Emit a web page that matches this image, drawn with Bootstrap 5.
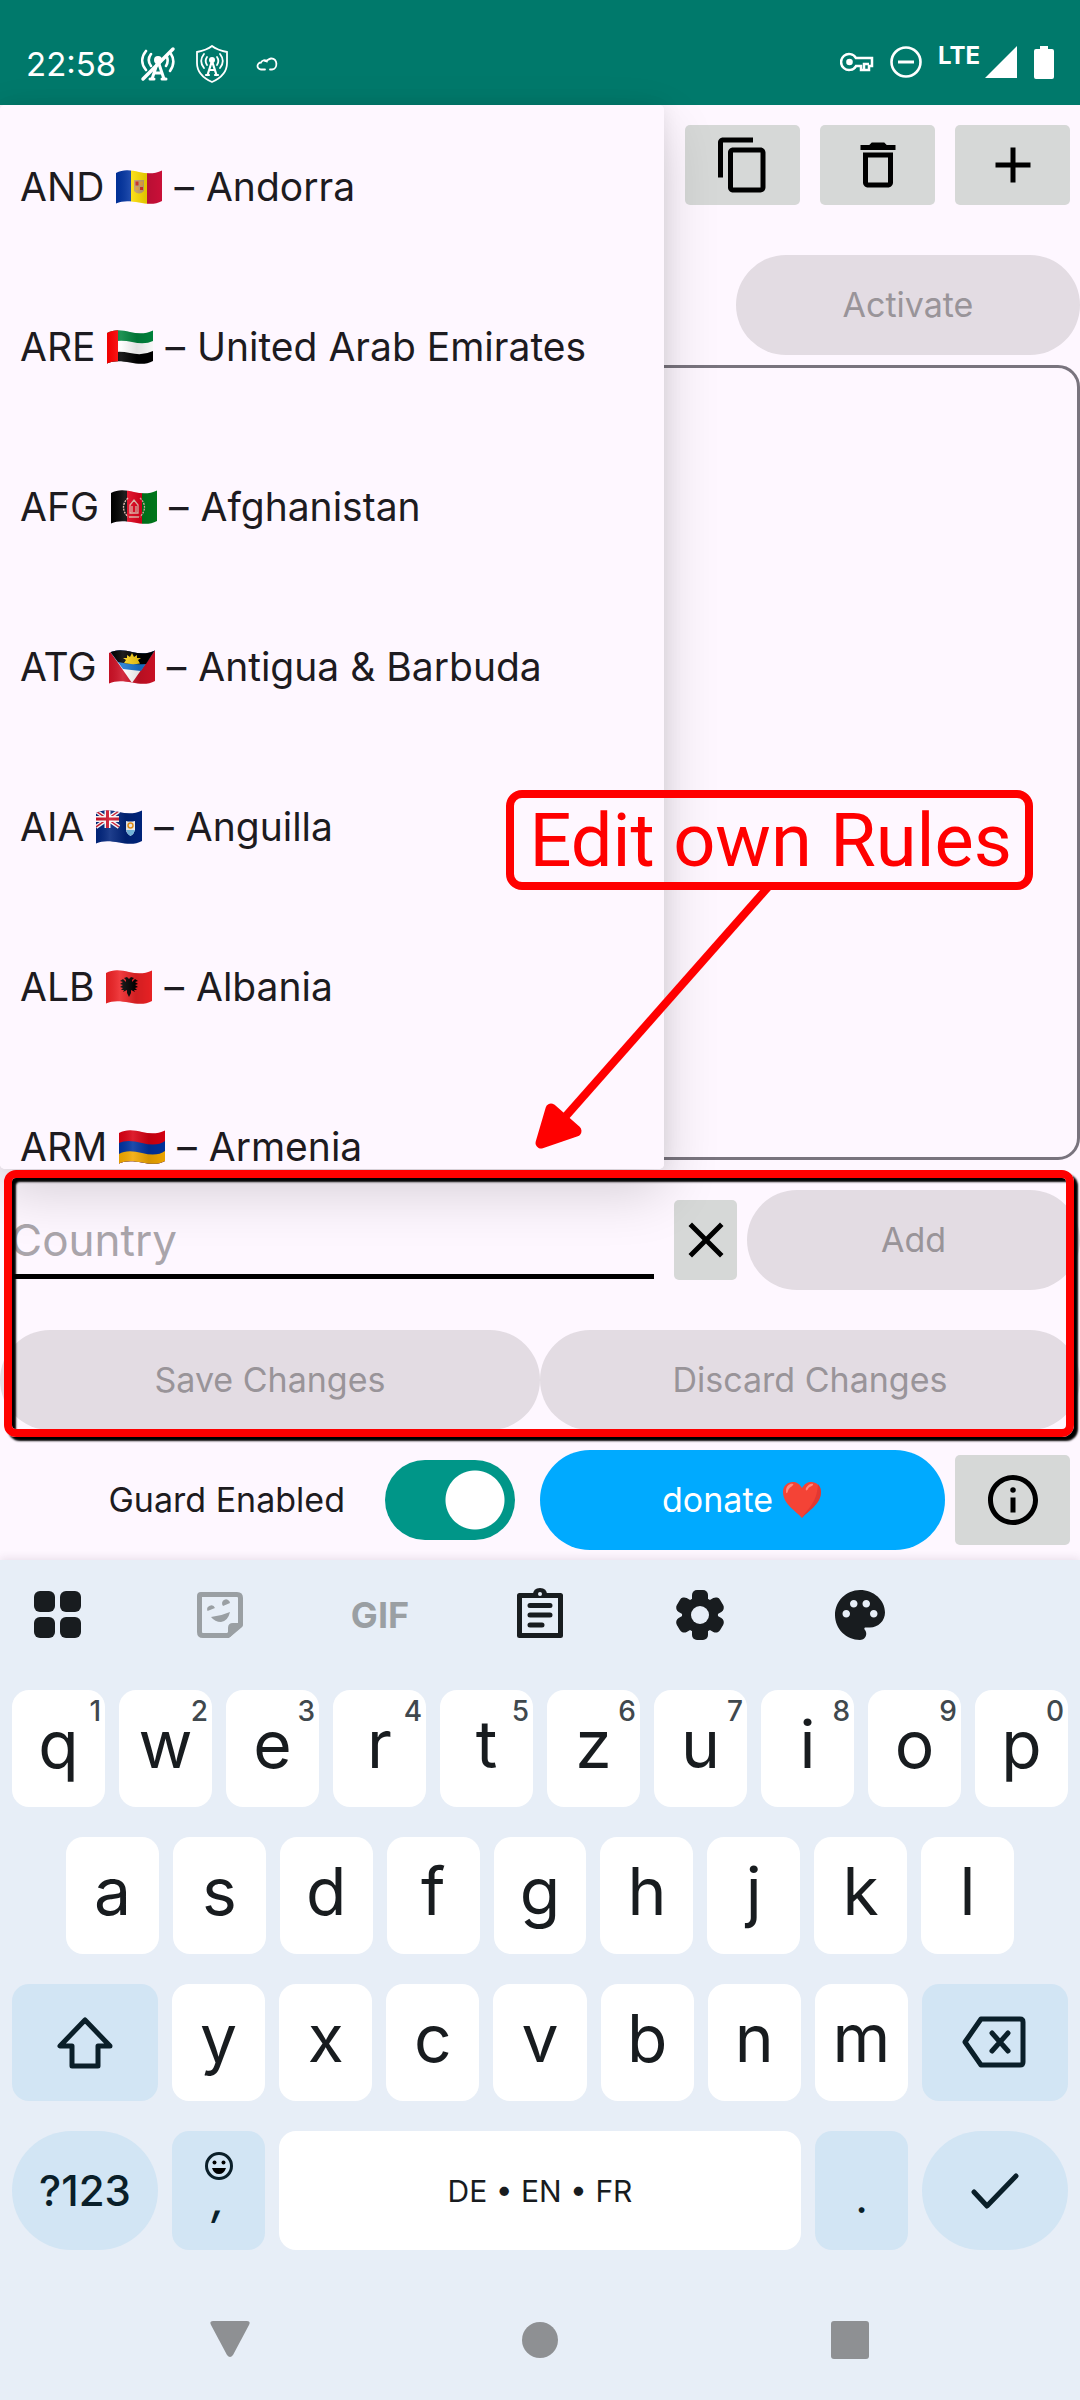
<!DOCTYPE html>
<html lang="en">
<head>
<meta charset="utf-8">
<meta name="viewport" content="width=device-width, initial-scale=1">
<title>Edit own Rules</title>
<link href="https://cdn.jsdelivr.net/npm/bootstrap@5.3.0/dist/css/bootstrap.min.css" rel="stylesheet">
<style>
  body { background: #fef7ff; color: #1d1b20; font-family: Inter, sans-serif; font-size: 34px; line-height: 44px; }
  svg { display: block; flex: none; }
  .status-bar { background: #00796b; color: #fff; height: 105px; padding: 42px 26px 0; font-size: 33px; }
  .net-type { font-size: 24px; line-height: 20px; font-weight: 700; margin-right: 4px; }
  .tool-row { padding: 20px 10px 50px; gap: 20px; }
  .gray-btn { background: #d6d8d7; border: 0; border-radius: 5px; padding: 0; color: #000; width: 115px; height: 80px; display: flex; align-items: center; justify-content: center; }
  .gray-btn.narrow { width: 63px; margin: 0 10px; }
  .gray-btn.tall { height: 90px; margin: 0 10px; }
  .pill-btn, .pill-btn:disabled { background: #e3dce3; color: #999499; border: 0; border-radius: 50px; height: 100px; font-size: 34px; line-height: 44px; padding: 0; opacity: 1; }
  .pill-act { width: 344px; }
  .pill-add { width: 333px; }
  .pill-btn.donate { background: #00aaff; color: #fff; }
  .rules-box { border: 3px solid #79747e; border-radius: 22px; background: transparent; min-height: 795px; resize: none; margin-top: 10px; }
  .edit-area { margin-top: 30px; }
  .edit-area .second-row { margin-top: 40px; }
  .country-input { border: 0; border-bottom: 5px solid #000; border-radius: 0; background: transparent; height: 89px; padding: 16px 0 0; margin: 0 10px; font-size: 44px; width: calc(100% - 20px); }
  .country-input::placeholder { color: #aaa5ab; opacity: 1; }
  .country-menu { position: absolute; left: 0; bottom: calc(100% + 21px); width: 100%; height: 1064px; overflow: hidden; background: #fef7ff; border-radius: 5px; z-index: 2; }
  .menu-shade { position: absolute; left: 0; bottom: calc(100% + 21px); width: 100%; height: 1064px; border-radius: 5px; z-index: 1; pointer-events: none; box-shadow: 0 24px 56px rgba(0,0,0,.16), 0 0 20px rgba(0,0,0,.08); }
  .country-item { height: 160px; padding: 4px 20px 0; gap: 12px; font-size: 39px; line-height: 48px; color: #1d1b20; text-decoration: none; white-space: nowrap; }
  .mark-frame { position: absolute; top: -20px; left: 4px; right: 6px; bottom: -7px; border: 8px solid #f00; border-radius: 12px; box-shadow: 4px 4px 2px #000, inset 4px 4px 2px #000; z-index: 4; pointer-events: none; }
  .callout-box { position: absolute; top: 685px; right: 47px; border: 8px solid #f00; border-radius: 16px; padding: 1px 13px 0 15px; color: #f00; font-family: Roboto, sans-serif; font-size: 74px; line-height: 83px; white-space: nowrap; z-index: 5; }
  .callout-arrow { position: absolute; top: 88px; left: 16px; }
  .guard-row { margin: 20px 0 10px; }
  .guard-side { gap: 40px; padding-right: 25px; }
  #guard { width: 130px; height: 80px; margin: 0; border: 0; border-radius: 40px; background: #009688 radial-gradient(circle at 90px 40px, #fff 29px, transparent 30px); box-shadow: none; }
  .keyboard { background: #e7eef7; box-shadow: 0 -2px 8px rgba(60,30,60,.1); color: #181c1f; }
  .kb-tools { padding: 25px 30px 45px; gap: 100px; }
  .kb-tools button { width: 60px; height: 60px; padding: 0; border: 0; background: none; color: #181c1f; }
  .kb-tools .faded { color: #9a9fa3; }
  .gif-text { font-size: 36px; line-height: 60px; font-weight: 700; }
  .kb-row { gap: 14px; padding: 0 12px; margin-bottom: 30px; }
  .kb-row.inset { padding: 0 66px; }
  .cap { flex: 1 1 0; min-width: 0; height: 117px; background: #fff; border: 0; border-radius: 17px; padding: 0 0 10px; font-size: 66px; line-height: 80px; color: #181c1f; position: relative; }
  .cap sup { position: absolute; top: 5px; right: 4px; font-size: 28px; line-height: 32px; color: #40484d; font-weight: 500; }
  .kb-row.last .cap { height: 119px; }
  .cap.side { flex: 0 0 146px; background: #d2e5f4; color: #0a1f29; padding: 0; display: flex; align-items: center; justify-content: center; }
  .cap.tint { flex: 0 0 93px; background: #d2e5f4; color: #0a1f29; padding: 0; display: flex; flex-direction: column; align-items: center; font-size: 44px; line-height: 44px; }
  .cap.dot { justify-content: flex-end; padding-bottom: 31px; }
  .cap.comma { padding-top: 20px; }
  .comma-mark { font-style: italic; font-weight: 500; line-height: 36px; }
  .cap.round { border-radius: 60px; font-size: 42px; font-weight: 500; }
  .cap.space { font-size: 30px; padding: 0; }
  .nav-keys { padding: 30px 200px; }
  .nav-keys button { width: 60px; height: 60px; border: 0; padding: 0; background: none; color: #8e9093; display: flex; align-items: center; justify-content: center; }
</style>
</head>
<body class="d-flex flex-column min-vh-100">
<svg width="0" height="0" class="position-absolute" aria-hidden="true"><defs>
  <clipPath id="wave"><path d="M0 3C7-1 15 0 23 2S39 4 46 .5V31C39 35 31 34 23 32.500S7 30 0 33.500Z"/></clipPath>
  <linearGradient id="fold"><stop offset="0" stop-color="#000" stop-opacity=".06"/><stop offset=".3" stop-color="#fff" stop-opacity=".12"/><stop offset=".65" stop-color="#000" stop-opacity=".12"/><stop offset="1" stop-color="#000" stop-opacity=".03"/></linearGradient>
</defs></svg>

<header class="status-bar d-flex align-items-start">
  <div class="d-flex align-items-center">
    <span>22:58</span>
    <svg class="ms-4" width="36" height="36" viewBox="0 0 36 36" fill="none" stroke="#fff" stroke-width="2.600" stroke-linecap="round"><path d="M6 5C1 11 1 18 6 24M11 8C8 12 8 16 11 20M31 8C35 14 34 19 30 25M27 11C28 14 28 17 26 20"/><circle cx="18" cy="14" r="4" fill="#fff" stroke="none"/><path d="M18 15 12 33M18 15 24 33M15 27H21M10 33H14M22 33H26" stroke-width="3"/><path d="M3 33 33 3" stroke-width="3.500"/></svg>
    <svg class="ms-3" width="40" height="38" viewBox="0 0 40 38" fill="none" stroke="#fff" stroke-width="1.800" stroke-linecap="round"><path d="M20 1C15 5 10 6 5 7V18C5 27 11 33 20 37C29 33 35 27 35 18V7C30 6 25 5 20 1Z"/><path d="M12 9C8 14 8 18 12 23M15 12C13 15 13 17 15 20M28 9C32 14 32 18 28 23M25 12C27 15 27 17 25 20"/><circle cx="20" cy="15" r="3" fill="#fff" stroke="none"/><path d="M20 16 15.500 30M20 16 24.500 30M17.500 25H22.500M14 30H17M23 30H26" stroke-width="2.200"/></svg>
    <svg class="ms-4" width="22" height="14" viewBox="0 0 22 14" fill="none" stroke="#fff" stroke-width="1.800" stroke-linecap="round"><path d="M9 12.500H5A3.500 3.500 0 0 1 5 5.500C6 3 9 2.500 11 4.500M9 4C12 4 12 2 15 1.500C22 1 22 12 16 12.500H14"/></svg>
  </div>
  <div class="d-flex align-items-start ms-auto pt-1">
    <svg width="34" height="32" viewBox="0 0 34 32" fill="none" stroke="#fff" stroke-width="2.500"><path d="M16 12A8 8 0 1 0 16 20H21V24H29V20H32V12Z"/><circle cx="9.500" cy="16" r="3.300" fill="#fff" stroke="none"/><path d="M24 24V18H29"/></svg>
    <svg class="ms-3" width="32" height="32" viewBox="0 0 32 32" fill="none" stroke="#fff" stroke-width="2.600"><circle cx="16" cy="16" r="14.500"/><path d="M8 16H24" stroke-width="3"/></svg>
    <span class="net-type ms-3 align-self-start">LTE</span>
    <svg width="34" height="32" viewBox="0 0 34 32" fill="#fff"><path d="M33 0V32H1Z"/></svg>
    <svg class="ms-3" width="20" height="33" viewBox="0 0 20 33" fill="#fff"><path d="M6 0H14V3H18Q20 3 20 5V31Q20 33 18 33H2Q0 33 0 31V5Q0 3 2 3H6Z"/></svg>
  </div>
</header>

<main class="position-relative d-flex flex-column flex-grow-1">
  <div class="tool-row d-flex justify-content-end">
    <button type="button" class="gray-btn" aria-label="Copy"><svg width="60" height="60" viewBox="0 0 24 24"><path d="M16 1H4c-1.100 0-2 .9-2 2v14h2V3h12V1zm3 4H8c-1.100 0-2 .9-2 2v14c0 1.100.9 2 2 2h11c1.100 0 2-.9 2-2V7c0-1.100-.9-2-2-2zm0 16H8V7h11v14z"/></svg></button>
    <button type="button" class="gray-btn" aria-label="Delete"><svg width="60" height="60" viewBox="0 0 24 24"><path d="M16 9v10H8V9h8m-1.500-6h-5l-1 1H5v2h14V4h-3.500l-1-1zM18 7H6v12c0 1.100.9 2 2 2h8c1.100 0 2-.9 2-2V7z"/></svg></button>
    <button type="button" class="gray-btn" aria-label="New"><svg width="60" height="60" viewBox="0 0 24 24"><path d="M19 13h-6v6h-2v-6H5v-2h6V5h2v6h6v2z"/></svg></button>
  </div>
  <div class="d-flex justify-content-end">
    <button type="button" class="btn pill-btn pill-act" disabled>Activate</button>
  </div>
  <textarea class="rules-box w-100 flex-grow-1" aria-label="Rules"></textarea>

  <section class="edit-area position-relative">
    <div class="d-flex align-items-center">
      <div class="flex-grow-1 position-relative align-self-start">
        <input class="form-control country-input" type="text" placeholder="Country" aria-label="Country">
        <div class="menu-shade"></div>
        <div class="country-menu">
          <a href="#" class="country-item d-flex align-items-center"><span>AND</span><svg width="46" height="34" viewBox="0 0 46 34"><g clip-path="url(#wave)"><path fill="#0032a0" d="M0 0H15V34H0z"/><path fill="#fedf00" d="M15 0H31V34H15z"/><path fill="#d0103a" d="M31 0H46V34H31z"/><path fill="#c7a06b" d="M18 10h10v11q-5 5-10 0z"/><path fill="#d52b1e" d="M19.500 11.500h3v4h-3zM24 17h3v3h-3z"/><path fill="#e8a33d" d="M24 11.500h3v4h-3zM19.500 17h3v3h-3z"/><path fill="url(#fold)" d="M0 0H46V34H0z"/></g></svg><span>–</span><span>Andorra</span></a>
          <a href="#" class="country-item d-flex align-items-center"><span>ARE</span><svg width="46" height="34" viewBox="0 0 46 34"><g clip-path="url(#wave)"><path fill="#fff" d="M0 0H46V34H0z"/><path fill="#00843d" d="M0 0H46V11Q38 15 25 12T0 13z"/><path fill="#000" d="M0 24Q10 20 23 23T46 21V34H0z"/><path fill="#f00" d="M0 0H11V34H0z"/><path fill="url(#fold)" d="M0 0H46V34H0z"/></g></svg><span>–</span><span>United Arab Emirates</span></a>
          <a href="#" class="country-item d-flex align-items-center"><span>AFG</span><svg width="46" height="34" viewBox="0 0 46 34"><g clip-path="url(#wave)"><path d="M0 0H16V34H0z"/><path fill="#e3001b" d="M16 0H31V34H16z"/><path fill="#007a1c" d="M31 0H46V34H31z"/><g fill="none" stroke="#e8b9ac" stroke-width="1.300"><path d="M17 8Q8 17 17 27M29 8Q38 17 29 27" stroke-dasharray="2 1"/><path d="M18 27H28M19 23V15L23 10 27 15V23ZM21 22V16M25 22V16"/></g><path fill="url(#fold)" d="M0 0H46V34H0z"/></g></svg><span>–</span><span>Afghanistan</span></a>
          <a href="#" class="country-item d-flex align-items-center"><span>ATG</span><svg width="46" height="34" viewBox="0 0 46 34"><g clip-path="url(#wave)"><path fill="#ce1126" d="M0 0H46V34H0z"/><path fill="#fff" d="M0 0H46L23 33z"/><path fill="#1a75cf" d="M0 0H46L32 21Q22 20 14 19z"/><path d="M0 0H46L37 14Q22 15 9 12z"/><path fill="#fcd116" d="M15 13 17 10 14 8 18 8 18 5 21 7 23 3 25 7 28 5 28 8 32 8 29 10 31 13.500Q23 15 15 13z"/><path fill="url(#fold)" d="M0 0H46V34H0z"/></g></svg><span>–</span><span>Antigua &amp; Barbuda</span></a>
          <a href="#" class="country-item d-flex align-items-center"><span>AIA</span><svg width="46" height="34" viewBox="0 0 46 34"><g clip-path="url(#wave)"><path fill="#00247d" d="M0 0H46V34H0z"/><path stroke="#fff" stroke-width="4" d="M0 1 23 17M23 1 0 17"/><path stroke="#cf142b" stroke-width="1.500" d="M0 1 23 17M23 1 0 17"/><path stroke="#fff" stroke-width="6" d="M11.500 0V18M0 9H23"/><path stroke="#cf142b" stroke-width="3" d="M11.500 0V18M0 9H23"/><path fill="#fff" d="M30 11Q34 12 39 11V20Q38 24 34.500 26Q30 23 30 20z"/><path fill="#7cc3ec" d="M30 20H39Q38 24 34.500 26Q31 24 30 20z"/><circle cx="34.500" cy="15.500" r="2.500" fill="none" stroke="#f59b1c" stroke-width="1.500"/><path fill="url(#fold)" d="M0 0H46V34H0z"/></g></svg><span>–</span><span>Anguilla</span></a>
          <a href="#" class="country-item d-flex align-items-center"><span>ALB</span><svg width="46" height="34" viewBox="0 0 46 34"><g clip-path="url(#wave)"><path fill="#ee2225" d="M0 0H46V34H0z"/><path d="M23 9 21 7 18 8 20 10 20 12 17 9 14 11 17 12 14 14 17 15 14 17 17 18 15 20 18 20 17 22 21 20 21 23 23 27 25 23 25 20 29 22 28 20 31 20 29 18 32 17 29 15 32 14 29 12 32 11 29 9 26 12 26 10 28 8 25 7z"/><path fill="url(#fold)" d="M0 0H46V34H0z"/></g></svg><span>–</span><span>Albania</span></a>
          <a href="#" class="country-item d-flex align-items-center"><span>ARM</span><svg width="46" height="34" viewBox="0 0 46 34"><g clip-path="url(#wave)"><path fill="#d90012" d="M0 0H46V34H0z"/><path fill="#0033a0" d="M0 13Q8 9 23 13T46 11V34H0z"/><path fill="#f2a800" d="M0 24Q8 19 23 23T46 21V34H0z"/><path fill="url(#fold)" d="M0 0H46V34H0z"/></g></svg><span>–</span><span>Armenia</span></a>
        </div>
      </div>
      <button type="button" class="gray-btn narrow flex-shrink-0" aria-label="Clear"><svg width="60" height="60" viewBox="0 0 24 24"><path d="M19 6.400 17.600 5 12 10.600 6.400 5 5 6.400 10.600 12 5 17.600 6.400 19 12 13.400 17.600 19 19 17.600 13.400 12z"/></svg></button>
      <button type="button" class="btn pill-btn pill-add flex-shrink-0" disabled>Add</button>
    </div>
    <div class="second-row d-flex">
      <button type="button" class="btn pill-btn w-50" disabled>Save Changes</button>
      <button type="button" class="btn pill-btn w-50" disabled>Discard Changes</button>
    </div>
    <div class="mark-frame"></div>
  </section>

  <div class="guard-row d-flex align-items-center">
    <div class="guard-side w-50 d-flex align-items-center justify-content-end">
      <label for="guard">Guard Enabled</label>
      <input class="form-check-input" type="checkbox" role="switch" id="guard" checked>
    </div>
    <button type="button" class="btn pill-btn donate flex-grow-1 d-flex align-items-center justify-content-center gap-2">donate
      <svg width="42" height="40" viewBox="0 0 42 40"><path fill="#f44336" d="M21 38C15 31 2 24 2 12C2 1 16-2 21 8C26-2 40 1 40 12C40 24 27 31 21 38Z"/><path fill="#ff8a80" d="M5 11C5 5 10 3 12 4C14 5 8 7 7 11C6 14 5 14 5 11ZM25 8C27 4 31 3 32 4C33 6 28 6 27 9C26 11 24 11 25 8Z"/><path fill="#d32f2f" d="M40 12C40 24 27 31 21 38C25 30 36 24 37 4C39 6 40 9 40 12Z" opacity=".55"/></svg>
    </button>
    <button type="button" class="gray-btn tall flex-shrink-0" aria-label="Info"><svg width="60" height="60" viewBox="0 0 24 24"><path d="M11 17h2v-6h-2v6zM12 2C6.500 2 2 6.500 2 12s4.500 10 10 10 10-4.500 10-10S17.500 2 12 2zm0 18c-4.400 0-8-3.600-8-8s3.600-8 8-8 8 3.600 8 8-3.600 8-8 8z"/><circle cx="12" cy="8" r="1.100"/></svg></button>
  </div>

  <div class="callout-box">Edit own Rules
    <svg class="callout-arrow" width="260" height="274" viewBox="530 886 260 274" stroke="#f00" fill="#f00"><path d="M769 886 566 1116" stroke-width="8"/><path d="M541 1143 551 1109 576 1131Z" stroke-width="11" stroke-linejoin="round"/></svg>
  </div>
</main>

<section class="keyboard" aria-label="Keyboard">
  <div class="kb-tools d-flex">
    <button type="button" aria-label="Menu"><svg width="60" height="60" viewBox="0 0 60 60" fill="currentColor"><rect x="4" y="6" width="21" height="21" rx="6"/><rect x="30" y="6" width="21" height="21" rx="6"/><rect x="4" y="32" width="21" height="21" rx="6"/><rect x="30" y="32" width="21" height="21" rx="6"/></svg></button>
    <button type="button" class="faded" aria-label="Stickers"><svg width="60" height="60" viewBox="0 0 60 60" fill="currentColor"><path fill="none" stroke="currentColor" stroke-width="5" stroke-linejoin="round" d="M11 9.500H47Q50.500 9.500 50.500 13V40L38 50.500H13Q9.500 50.500 9.500 47V11Q9.500 9.500 11 9.500Z"/><path d="M38 52V43Q38 38 43 38H52V40L40 52ZM17.500 26A4 4 0 1 1 25 23ZM33 21A4 4 0 1 1 40 18ZM21 32Q31 31 40 27Q38 36 31 37Q25 37 21 32Z"/></svg></button>
    <button type="button" class="faded gif-text">GIF</button>
    <button type="button" aria-label="Clipboard"><svg width="60" height="60" viewBox="0 0 60 60" fill="none" stroke="currentColor" stroke-width="5" stroke-linecap="round" stroke-linejoin="round"><path d="M9.500 10.500H50.500V50.500H9.500ZM20 20.500H40M20 30H40M20 40H32"/><path d="M23 10Q23 3 30 3T37 10V12H23Z" fill="currentColor" stroke="none"/><circle cx="30" cy="9" r="2" fill="#e7eef7" stroke="none"/></svg></button>
    <button type="button" aria-label="Settings"><svg width="60" height="60" viewBox="0 0 60 60"><g fill="currentColor"><circle cx="30" cy="30" r="18"/><rect x="22" y="5" width="16" height="50" rx="5"/><rect x="22" y="5" width="16" height="50" rx="5" transform="rotate(60 30 30)"/><rect x="22" y="5" width="16" height="50" rx="5" transform="rotate(120 30 30)"/></g><circle cx="30" cy="30" r="9" fill="#e7eef7"/></svg></button>
    <button type="button" aria-label="Theme"><svg width="60" height="60" viewBox="0 0 24 24" fill="currentColor"><path d="M12 2C6.490 2 2 6.490 2 12s4.490 10 10 10c1.380 0 2.500-1.120 2.500-2.500 0-.61-.23-1.200-.64-1.670-.08-.1-.13-.21-.13-.33 0-.28.22-.5.5-.5H16c3.310 0 6-2.690 6-6 0-4.960-4.490-9-10-9zm-5.500 11c-.83 0-1.500-.67-1.500-1.500S5.670 10 6.500 10s1.500.67 1.500 1.500S7.330 13 6.500 13zm3-4C8.670 9 8 8.330 8 7.500S8.670 6 9.500 6s1.500.67 1.500 1.500S10.330 9 9.500 9zm5 0c-.83 0-1.500-.67-1.500-1.500S13.670 6 14.500 6s1.500.67 1.500 1.500S15.330 9 14.500 9zm3 4c-.83 0-1.500-.67-1.500-1.500s.67-1.500 1.500-1.500 1.500.67 1.500 1.500-.67 1.500-1.500 1.500z"/></svg></button>
  </div>
  <div class="kb-row d-flex">
    <button type="button" class="cap">q<sup>1</sup></button><button type="button" class="cap">w<sup>2</sup></button><button type="button" class="cap">e<sup>3</sup></button><button type="button" class="cap">r<sup>4</sup></button><button type="button" class="cap">t<sup>5</sup></button><button type="button" class="cap">z<sup>6</sup></button><button type="button" class="cap">u<sup>7</sup></button><button type="button" class="cap">i<sup>8</sup></button><button type="button" class="cap">o<sup>9</sup></button><button type="button" class="cap">p<sup>0</sup></button>
  </div>
  <div class="kb-row inset d-flex">
    <button type="button" class="cap">a</button><button type="button" class="cap">s</button><button type="button" class="cap">d</button><button type="button" class="cap">f</button><button type="button" class="cap">g</button><button type="button" class="cap">h</button><button type="button" class="cap">j</button><button type="button" class="cap">k</button><button type="button" class="cap">l</button>
  </div>
  <div class="kb-row d-flex">
    <button type="button" class="cap side" aria-label="Shift"><svg width="60" height="60" viewBox="0 0 60 60" fill="none" stroke="currentColor" stroke-width="5" stroke-linejoin="round"><path d="M30 7 5 33H17V53H43V33H55Z"/></svg></button>
    <button type="button" class="cap">y</button><button type="button" class="cap">x</button><button type="button" class="cap">c</button><button type="button" class="cap">v</button><button type="button" class="cap">b</button><button type="button" class="cap">n</button><button type="button" class="cap">m</button>
    <button type="button" class="cap side" aria-label="Backspace"><svg width="66" height="60" viewBox="0 0 66 60" fill="none" stroke="currentColor" stroke-width="5" stroke-linejoin="round"><path d="M19 6H58Q61 6 61 9V49Q61 52 58 52H19L3 29Z"/><path d="M30 20 46 38M46 20 30 38" stroke-linecap="round"/></svg></button>
  </div>
  <div class="kb-row last d-flex">
    <button type="button" class="cap side round">?123</button>
    <button type="button" class="cap tint comma"><svg width="30" height="30" viewBox="0 0 30 30"><circle cx="15" cy="15" r="12.500" fill="none" stroke="currentColor" stroke-width="3"/><circle cx="10.500" cy="11.500" r="2"/><circle cx="19.500" cy="11.500" r="2"/><path d="M8 17H22Q20 23 15 23T8 17Z"/></svg><span class="comma-mark">,</span></button>
    <button type="button" class="cap space">DE • EN • FR</button>
    <button type="button" class="cap tint dot">.</button>
    <button type="button" class="cap side round" aria-label="Done"><svg width="60" height="60" viewBox="0 0 60 60" fill="none" stroke="currentColor" stroke-width="5" stroke-linecap="round" stroke-linejoin="round"><path d="M9 31 22 45 51 15"/></svg></button>
  </div>
  <div class="nav-keys d-flex justify-content-between">
    <button type="button" aria-label="Back"><svg width="40" height="38" viewBox="0 0 40 38" fill="currentColor"><path d="M3 0H37Q41 0 39 4L23 34Q20 38 17 34L1 4Q-1 0 3 0Z"/></svg></button>
    <button type="button" aria-label="Home"><svg width="36" height="36" viewBox="0 0 36 36" fill="currentColor"><circle cx="18" cy="18" r="18"/></svg></button>
    <button type="button" aria-label="Recents"><svg width="38" height="38" viewBox="0 0 38 38" fill="currentColor"><rect width="38" height="38" rx="3"/></svg></button>
  </div>
</section>
<script src="https://cdn.jsdelivr.net/npm/bootstrap@5.3.0/dist/js/bootstrap.bundle.min.js"></script>
</body>
</html>
